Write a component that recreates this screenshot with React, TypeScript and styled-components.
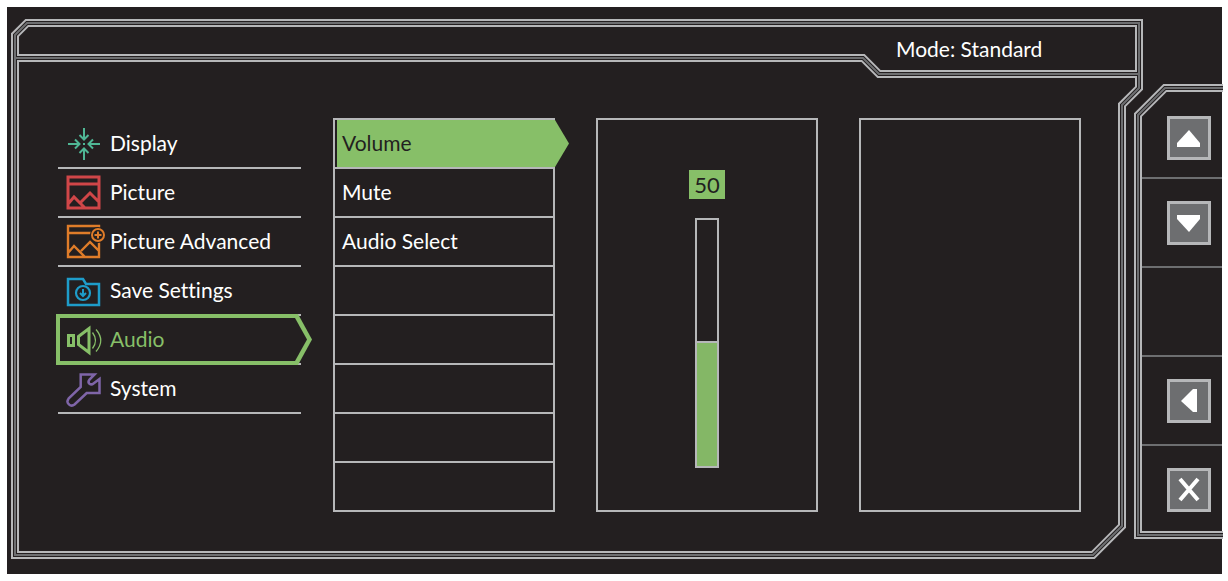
import { useLayoutEffect, useRef, useState } from "react";
import type { ReactNode } from "react";
import styled, { createGlobalStyle, css } from "styled-components";

const color = {
  base: "#231f20",
  line: "#b6b7b9",
  dim: "#6d6e70",
  green: "#87bf68",
  text: "#ffffff",
};

const GlobalStyle = createGlobalStyle`
  *, *::before, *::after { box-sizing: border-box; }
  body {
    margin: 0;
    background: #ffffff;
    font-family: Lato, "Liberation Sans", sans-serif;
    font-variant-ligatures: none;
  }
  button { font: inherit; font-variant-ligatures: inherit; }
`;

const Page = styled.div`
  min-height: 100vh;
  padding: 7px 6px 7px 7px;
`;

const Screen = styled.main`
  position: relative;
  display: flex;
  background: ${color.base};
  color: ${color.text};
  font-size: 21px;
  line-height: 24px;
`;

const FrameSvg = styled.svg`
  position: absolute;
  inset: 0;
  width: 100%;
  height: 100%;
  overflow: visible;
  pointer-events: none;
  fill: none;
`;

const Main = styled.div`
  flex: 1;
  min-width: 0;
  display: flex;
  flex-direction: column;
`;

const Header = styled.header`
  display: flex;
  justify-content: flex-end;
  padding-top: 30px;
  height: 71px;
`;

const Mode = styled.p`
  margin: 0;
  width: 246px;
`;

const Content = styled.div`
  display: flex;
  gap: 32px;
  padding: 40px 61px 62px 51px;
`;

const Menu = styled.nav`
  flex: 243 1 0;
  min-width: 0;
  padding-top: 2px;
`;

const PlainList = styled.ul`
  list-style: none;
  margin: 0;
  padding: 0;
`;

const MenuRow = styled.li`
  height: 49px;
  border-bottom: 2px solid ${color.line};
`;

const activeShape = css`
  &::before,
  &::after {
    content: "";
    position: absolute;
    z-index: -1;
  }
  &::before {
    inset: -2px -11px -2px -2px;
    background: ${color.green};
    clip-path: polygon(0 0, calc(100% - 14px) 0, 100% 50%, calc(100% - 14px) 100%, 0 100%);
  }
  &::after {
    inset: 2px -6px 2px 2px;
    background: ${color.base};
    clip-path: polygon(0 0, calc(100% - 12px) 0, 100% 50%, calc(100% - 12px) 100%, 0 100%);
  }
`;

const MenuButton = styled.button<{ $active?: boolean }>`
  position: relative;
  z-index: 0;
  display: flex;
  align-items: center;
  gap: 8px;
  width: 100%;
  height: 47px;
  padding: 0 0 0 8px;
  border: 0;
  background: none;
  text-align: left;
  white-space: nowrap;
  color: ${(p) => (p.$active ? color.green : color.text)};
  ${(p) => p.$active && activeShape}
`;

const MenuLabel = styled.span`
  padding-bottom: 2px;
`;

const Icon = styled.svg`
  flex: none;
  width: 36px;
  height: 36px;
  overflow: visible;
  fill: none;
`;

const Panels = styled.div`
  flex: 748 1 0;
  min-width: 0;
  display: grid;
  grid-template-columns: repeat(3, 1fr);
  gap: 41px;
`;

const OptionList = styled(PlainList)`
  border: 2px solid ${color.line};
`;

const OptionRow = styled.li`
  height: 49px;
  border-bottom: 2px solid ${color.line};
  &:last-child {
    height: 47px;
    border-bottom: 0;
  }
`;

const OptionButton = styled.button<{ $active?: boolean }>`
  position: relative;
  z-index: 0;
  display: block;
  width: 100%;
  height: 47px;
  padding: 0 0 2px 7px;
  border: 0;
  background: none;
  text-align: left;
  color: ${(p) => (p.$active ? color.base : color.text)};
  ${(p) =>
    p.$active &&
    css`
      &::before {
        content: "";
        position: absolute;
        z-index: -1;
        inset: 0 -16px 0 2px;
        background: ${color.green};
        clip-path: polygon(0 0, calc(100% - 14px) 0, 100% 50%, calc(100% - 14px) 100%, 0 100%);
      }
    `}
`;

const Panel = styled.section`
  display: flex;
  flex-direction: column;
  align-items: center;
  gap: 19px;
  padding-top: 50px;
  border: 2px solid ${color.line};
`;

const Level = styled.output`
  width: 36px;
  height: 29px;
  line-height: 29px;
  font-size: 22px;
  text-align: center;
  background: ${color.green};
  color: ${color.base};
`;

const VolumeSlider = styled.input`
  appearance: none;
  writing-mode: vertical-lr;
  direction: rtl;
  width: 24px;
  height: 250px;
  margin: 0;
  border: 2px solid ${color.line};
  background: linear-gradient(
    to top,
    #84b766 var(--level),
    ${color.line} var(--level) calc(var(--level) + 2px),
    transparent calc(var(--level) + 2px)
  );
  &::-webkit-slider-thumb {
    appearance: none;
    width: 20px;
    height: 2px;
    background: transparent;
  }
`;

const Side = styled.aside`
  width: 80px;
  padding-top: 91px;
`;

const KeyRow = styled.div`
  display: flex;
  align-items: center;
  justify-content: center;
  height: 89px;
  padding-left: 14px;
  border-top: 2px solid ${color.dim};
  &:first-child {
    height: 79px;
    border-top: 0;
  }
`;

const Key = styled.button`
  display: grid;
  place-items: center;
  width: 44px;
  height: 44px;
  padding: 0;
  border: 3px solid ${color.line};
  background: ${color.dim};
`;

function FrameLines() {
  const ref = useRef<SVGSVGElement>(null);
  const [{ w, h }, setSize] = useState({ w: 0, h: 0 });

  useLayoutEffect(() => {
    const el = ref.current;
    if (!el) return;
    const measure = () => {
      const box = el.getBoundingClientRect();
      setSize({ w: Math.round(box.width), h: Math.round(box.height) });
    };
    measure();
    const observer = new ResizeObserver(measure);
    observer.observe(el);
    return () => observer.disconnect();
  }, []);

  const d = [
    `M20 16H${w - 83}V81L${w - 100} 98V${h - 48}L${w - 129} ${h - 19}H8V28Z`,
    `M8 51H${w - 359}L${w - 343} 67H${w - 83}`,
    `M${w + 1} 81H${w - 57}L${w - 84} 108V${h - 39}H${w + 1}`,
  ].join("");

  return (
    <FrameSvg ref={ref} aria-hidden="true">
      {w > 0 && (
        <>
          <path d={d} stroke={color.line} strokeWidth="8" />
          <path d={d} stroke={color.base} strokeWidth="4" />
          <path d={d} stroke={color.dim} strokeWidth="2" />
        </>
      )}
    </FrameSvg>
  );
}

const DisplayIcon = () => (
  <Icon viewBox="0 0 36 36" stroke="#4fb795" strokeWidth="2" aria-hidden="true">
    <path d="M18 2v11M13.5 9l4.5 4.500 4.500-4.500M18 34V23M13.500 27l4.500-4.500 4.500 4.500M2 18h11M9 13.500l4.500 4.500-4.500 4.500M34 18H23M27 13.500l-4.500 4.500 4.500 4.500M17 18h2" />
  </Icon>
);

const PictureIcon = () => (
  <Icon viewBox="0 0 36 36" stroke="#d04648" strokeWidth="3" aria-hidden="true">
    <path d="M2 2h31v31H2zM2 9h31M2 29l6-7 11 11M15 27l9-9 9 9" />
  </Icon>
);

const PictureAdvancedIcon = () => (
  <Icon viewBox="0 0 36 36" stroke="#df7c29" strokeWidth="2.4" aria-hidden="true">
    <path d="M2 2h31v31H2zM2 9h31M2 29l6-7 11 11M15 27l9-9 9 9" />
    <circle cx="32" cy="11" r="8" fill={color.base} stroke="none" />
    <circle cx="32" cy="11" r="6" strokeWidth="2" />
    <path d="M28.500 11h7M32 7.500v7" strokeWidth="2" />
  </Icon>
);

const SaveIcon = () => (
  <Icon viewBox="0 0 36 36" stroke="#1e9cc9" strokeWidth="2.5" aria-hidden="true">
    <path d="M2 6h15l3 5h13v21H2z" />
    <circle cx="17" cy="20" r="7" strokeWidth="2.2" />
    <path d="M17 16v7M14 20l3 3 3-3" strokeWidth="2" />
  </Icon>
);

const AudioIcon = () => (
  <Icon viewBox="0 0 36 36" stroke={color.green} strokeWidth="3" aria-hidden="true">
    <path d="M2.500 13.500h5v10h-5zM12.500 14.500l10.500-8v24l-10.500-8z" />
    <path d="M26.500 10.500q6 8 0 16M30 7.500q9.500 11 0 22" strokeWidth="1.3" />
  </Icon>
);

const SystemIcon = () => (
  <Icon viewBox="0 0 36 36" stroke="#7f65a8" strokeWidth="2.5" aria-hidden="true">
    <path d="M14.700 3.500H28.500L23.500 8.500Q21.500 11 23.500 12.700Q25.500 14.200 27.500 12.500L33.500 8V22H20.700L8.500 33.500A4.200 4.200 0 0 1 2.500 27.700L14.700 16Z" />
  </Icon>
);

const menu: { label: string; icon: ReactNode }[] = [
  { label: "Display", icon: <DisplayIcon /> },
  { label: "Picture", icon: <PictureIcon /> },
  { label: "Picture Advanced", icon: <PictureAdvancedIcon /> },
  { label: "Save Settings", icon: <SaveIcon /> },
  { label: "Audio", icon: <AudioIcon /> },
  { label: "System", icon: <SystemIcon /> },
];

const options = ["Volume", "Mute", "Audio Select", "", "", "", "", ""];

const keys: { name: string; d: string; cross?: boolean }[] = [
  { name: "Up", d: "M19 11L30 24V28H7V24Z" },
  { name: "Down", d: "M19 28L30 15V11H7V15Z" },
  { name: "", d: "" },
  { name: "Back", d: "M11 19L23 7H27V30H23Z" },
  { name: "Exit", d: "M10 8L28 29M28 8L10 29", cross: true },
];

export default function App() {
  const [volume, setVolume] = useState(50);

  return (
    <Page>
      <GlobalStyle />
      <Screen>
        <FrameLines />
        <Main>
          <Header>
            <Mode>Mode: Standard</Mode>
          </Header>
          <Content>
            <Menu>
              <PlainList>
                {menu.map(({ label, icon }) => (
                  <MenuRow key={label}>
                    <MenuButton type="button" $active={label === "Audio"}>
                      {icon}
                      <MenuLabel>{label}</MenuLabel>
                    </MenuButton>
                  </MenuRow>
                ))}
              </PlainList>
            </Menu>
            <Panels>
              <OptionList>
                {options.map((label, i) => (
                  <OptionRow key={i}>
                    {label && (
                      <OptionButton type="button" $active={label === "Volume"}>
                        {label}
                      </OptionButton>
                    )}
                  </OptionRow>
                ))}
              </OptionList>
              <Panel>
                <Level htmlFor="volume">{volume}</Level>
                <VolumeSlider
                  id="volume"
                  type="range"
                  aria-label="Volume"
                  min={0}
                  max={100}
                  value={volume}
                  onChange={(e) => setVolume(Number(e.target.value))}
                  style={{ ["--level" as string]: `${volume}%` }}
                />
              </Panel>
              <Panel />
            </Panels>
          </Content>
        </Main>
        <Side>
          {keys.map(({ name, d, cross }, i) => (
            <KeyRow key={i}>
              {name && (
                <Key type="button" aria-label={name}>
                  <svg width="38" height="38" viewBox="0 0 38 38" aria-hidden="true">
                    <path
                      d={d}
                      fill={cross ? "none" : "#ffffff"}
                      stroke={cross ? "#ffffff" : "none"}
                      strokeWidth="4"
                    />
                  </svg>
                </Key>
              )}
            </KeyRow>
          ))}
        </Side>
      </Screen>
    </Page>
  );
}
